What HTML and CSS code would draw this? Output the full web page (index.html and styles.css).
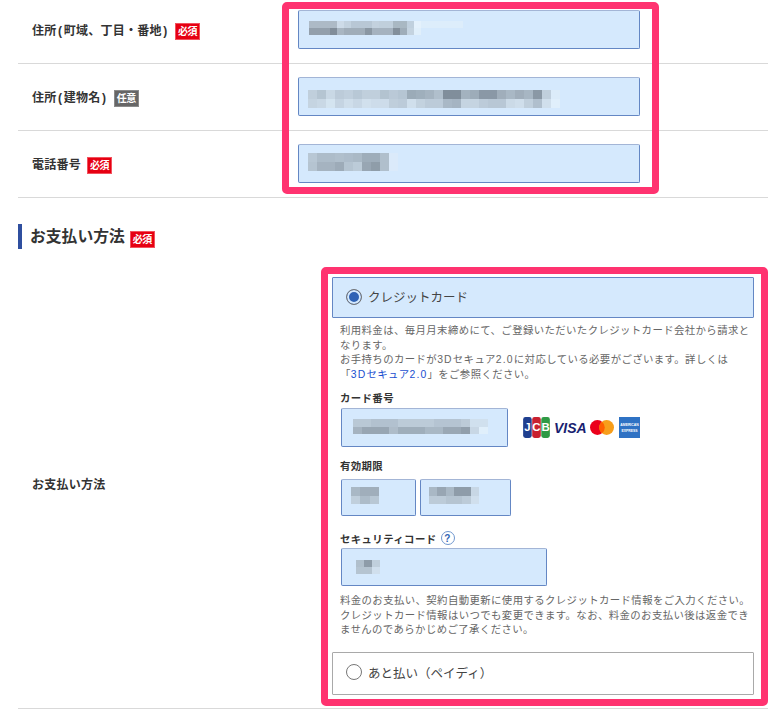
FILE: index.html
```html
<!DOCTYPE html>
<html lang="ja">
<head>
<meta charset="utf-8">
<title>お支払い方法</title>
<link rel="stylesheet" href="styles.css">
</head>
<body>
<main class="form">
  <div class="row row-first">
    <div class="label">住所<span class="paren">(</span>町域、丁目・番地<span class="paren">)</span><span class="badge">必須</span></div>
    <div class="field field-wide">
      <svg class="mosaic m1" viewBox="0 0 22 2" preserveAspectRatio="none" shape-rendering="crispEdges">
        <rect x="0" y="0" width="4" height="1" fill="#adbac6"/><rect x="4" y="0" width="1" height="1" fill="#cddbe8"/><rect x="5" y="0" width="1" height="1" fill="#c3d2df"/><rect x="6" y="0" width="3" height="1" fill="#b8c7d5"/><rect x="9" y="0" width="1" height="1" fill="#c3d1de"/><rect x="10" y="0" width="2" height="1" fill="#c0cfdc"/><rect x="12" y="0" width="2" height="1" fill="#a9b8c3"/><rect x="14" y="0" width="1" height="1" fill="#c0d0de"/><rect x="15" y="0" width="1" height="1" fill="#e4f1fc"/><rect x="16" y="0" width="6" height="1" fill="#ddedfb"/>
        <rect x="0" y="1" width="3" height="1" fill="#939fab"/><rect x="3" y="1" width="1" height="1" fill="#818d99"/><rect x="4" y="1" width="1" height="1" fill="#a9b6c2"/><rect x="5" y="1" width="3" height="1" fill="#a0adb9"/><rect x="8" y="1" width="1" height="1" fill="#8a97a3"/><rect x="9" y="1" width="3" height="1" fill="#a5b2bf"/><rect x="12" y="1" width="1" height="1" fill="#838f9b"/><rect x="13" y="1" width="1" height="1" fill="#9fadb9"/><rect x="14" y="1" width="1" height="1" fill="#c4d3e0"/><rect x="15" y="1" width="1" height="1" fill="#e0effb"/>
      </svg>
    </div>
  </div>
  <div class="row">
    <div class="label">住所<span class="paren">(</span>建物名<span class="paren">)</span><span class="badge badge-optional">任意</span></div>
    <div class="field field-wide">
      <svg class="mosaic m2" viewBox="0 0 28 2" preserveAspectRatio="none" shape-rendering="crispEdges">
        <rect x="0" y="0" width="1" height="1" fill="#c0cfdc"/><rect x="1" y="0" width="1" height="1" fill="#b5c5d2"/><rect x="2" y="0" width="1" height="1" fill="#c9d8e5"/><rect x="3" y="0" width="1" height="1" fill="#bccbd9"/><rect x="4" y="0" width="1" height="1" fill="#c0cfdd"/><rect x="5" y="0" width="1" height="1" fill="#b8c8d6"/><rect x="6" y="0" width="2" height="1" fill="#c0cfdc"/><rect x="8" y="0" width="1" height="1" fill="#b3c3d0"/><rect x="9" y="0" width="1" height="1" fill="#bac9d7"/><rect x="10" y="0" width="1" height="1" fill="#b5c5d3"/><rect x="11" y="0" width="1" height="1" fill="#9babb8"/><rect x="12" y="0" width="1" height="1" fill="#9fafbc"/><rect x="13" y="0" width="1" height="1" fill="#a5b4c1"/><rect x="14" y="0" width="1" height="1" fill="#b0bfcc"/><rect x="15" y="0" width="2" height="1" fill="#808e9b"/><rect x="17" y="0" width="1" height="1" fill="#a3b2bf"/><rect x="18" y="0" width="1" height="1" fill="#9dacb9"/><rect x="19" y="0" width="2" height="1" fill="#8a98a6"/><rect x="21" y="0" width="1" height="1" fill="#a0aebb"/><rect x="22" y="0" width="1" height="1" fill="#a9b8c5"/><rect x="23" y="0" width="1" height="1" fill="#a0aebb"/><rect x="24" y="0" width="1" height="1" fill="#a7b6c3"/><rect x="25" y="0" width="1" height="1" fill="#8a98a5"/><rect x="26" y="0" width="1" height="1" fill="#c0cfdc"/><rect x="27" y="0" width="1" height="1" fill="#dcecf9"/>
        <rect x="0" y="1" width="1" height="1" fill="#c5d4e1"/><rect x="1" y="1" width="1" height="1" fill="#c9d8e5"/><rect x="2" y="1" width="1" height="1" fill="#d4e4f0"/><rect x="3" y="1" width="1" height="1" fill="#c5d4e2"/><rect x="4" y="1" width="1" height="1" fill="#cfdeeb"/><rect x="5" y="1" width="1" height="1" fill="#c8d7e5"/><rect x="6" y="1" width="1" height="1" fill="#d1e0ed"/><rect x="7" y="1" width="2" height="1" fill="#cddcea"/><rect x="9" y="1" width="1" height="1" fill="#bfcedb"/><rect x="10" y="1" width="1" height="1" fill="#bccbd9"/><rect x="11" y="1" width="1" height="1" fill="#d0dfec"/><rect x="12" y="1" width="1" height="1" fill="#c3d2df"/><rect x="13" y="1" width="2" height="1" fill="#bccbd9"/><rect x="15" y="1" width="1" height="1" fill="#a9b8c6"/><rect x="16" y="1" width="1" height="1" fill="#a5b4c2"/><rect x="17" y="1" width="2" height="1" fill="#c5d4e1"/><rect x="19" y="1" width="1" height="1" fill="#bccbd9"/><rect x="20" y="1" width="2" height="1" fill="#b8c7d5"/><rect x="22" y="1" width="1" height="1" fill="#cbdae7"/><rect x="23" y="1" width="1" height="1" fill="#cfdeeb"/><rect x="24" y="1" width="1" height="1" fill="#c0cfdc"/><rect x="25" y="1" width="1" height="1" fill="#b0bfcd"/><rect x="26" y="1" width="1" height="1" fill="#d0dfec"/><rect x="27" y="1" width="1" height="1" fill="#e0effb"/>
      </svg>
    </div>
  </div>
  <div class="row">
    <div class="label">電話番号<span class="badge">必須</span></div>
    <div class="field field-wide">
      <svg class="mosaic m3" viewBox="0 0 10 2" preserveAspectRatio="none" shape-rendering="crispEdges">
        <rect x="0" y="0" width="1" height="1" fill="#b8c7d4"/><rect x="1" y="0" width="2" height="1" fill="#adbcc9"/><rect x="3" y="0" width="1" height="1" fill="#b0bfcc"/><rect x="4" y="0" width="1" height="1" fill="#adbcca"/><rect x="5" y="0" width="1" height="1" fill="#aab9c6"/><rect x="6" y="0" width="2" height="1" fill="#9eadba"/><rect x="8" y="0" width="1" height="1" fill="#b0bfcc"/><rect x="9" y="0" width="1" height="1" fill="#dbeafa"/>
        <rect x="0" y="1" width="1" height="1" fill="#b5c4d1"/><rect x="1" y="1" width="2" height="1" fill="#a5b3c0"/><rect x="3" y="1" width="1" height="1" fill="#9dabb8"/><rect x="4" y="1" width="1" height="1" fill="#b5c4d1"/><rect x="5" y="1" width="1" height="1" fill="#bccbd8"/><rect x="6" y="1" width="1" height="1" fill="#98a6b3"/><rect x="7" y="1" width="1" height="1" fill="#8f9da9"/><rect x="8" y="1" width="1" height="1" fill="#b0bfcc"/><rect x="9" y="1" width="1" height="1" fill="#dbeafa"/>
      </svg>
    </div>
  </div>

  <h2 class="heading">お支払い方法<span class="badge">必須</span></h2>

  <div class="row row-pay">
    <div class="label">お支払い方法</div>
    <div class="pay">
      <div class="option option-on"><span class="radio radio-on"></span>クレジットカード</div>
      <p class="note note-first">利用料金は、毎月月末締めにて、ご登録いただいたクレジットカード会社から請求となります。<br>お手持ちのカードが<span class="latin">3D</span>セキュア<span class="latin">2.0</span>に対応している必要がございます。詳しくは<br>「<a class="link" href="#"><span class="latin">3D</span>セキュア<span class="latin">2.0</span></a>」をご参照ください。</p>

      <div class="sub-label sl-card">カード番号</div>
      <div class="card-line">
        <div class="field field-card">
          <svg class="mosaic m4" viewBox="0 0 15 2" preserveAspectRatio="none" shape-rendering="crispEdges">
            <rect x="0" y="0" width="2" height="1" fill="#b9c8d5"/><rect x="2" y="0" width="3" height="1" fill="#b2c1cf"/><rect x="5" y="0" width="4" height="1" fill="#bccbd8"/><rect x="9" y="0" width="3" height="1" fill="#b5c4d2"/><rect x="12" y="0" width="1" height="1" fill="#bccbd8"/><rect x="13" y="0" width="2" height="1" fill="#d0e0ee"/>
            <rect x="0" y="1" width="1" height="1" fill="#a5b3c0"/><rect x="1" y="1" width="3" height="1" fill="#98a6b3"/><rect x="4" y="1" width="1" height="1" fill="#aebcc9"/><rect x="5" y="1" width="3" height="1" fill="#9faebb"/><rect x="8" y="1" width="2" height="1" fill="#a9b8c5"/><rect x="10" y="1" width="2" height="1" fill="#9aa8b5"/><rect x="12" y="1" width="1" height="1" fill="#919fac"/><rect x="13" y="1" width="1" height="1" fill="#c8d7e5"/><rect x="14" y="1" width="1" height="1" fill="#e0effb"/>
          </svg>
        </div>
        <div class="brands">
          <svg class="logo logo-mark-jcb" width="27" height="21" viewBox="0 0 28 22">
            <rect x="0" y="0" width="9" height="22" rx="2.5" fill="#1f3f8f"/>
            <rect x="9.5" y="0" width="9" height="22" rx="2.5" fill="#c8202f"/>
            <rect x="19" y="0" width="9" height="22" rx="2.5" fill="#2f9a45"/>
            <text class="logo-jcb" x="4.5" y="15" text-anchor="middle">J</text>
            <text class="logo-jcb" x="14" y="15" text-anchor="middle">C</text>
            <text class="logo-jcb" x="23.5" y="15" text-anchor="middle">B</text>
          </svg>
          <span class="visa">VISA</span>
          <svg class="logo" width="24" height="15" viewBox="0 0 26 16">
            <circle cx="8" cy="8" r="8" fill="#eb001b"/>
            <circle cx="18" cy="8" r="8" fill="#f79e1b"/>
            <path d="M13 1.75a8 8 0 0 1 0 12.5a8 8 0 0 1 0-12.5z" fill="#ff5f00"/>
          </svg>
          <svg class="logo amex" width="21" height="21" viewBox="0 0 21 21">
            <rect width="21" height="21" fill="#2f72c4"/>
            <text class="logo-amex" x="10.5" y="9" text-anchor="middle">AMERICAN</text>
            <text class="logo-amex" x="10.5" y="15" text-anchor="middle">EXPRESS</text>
          </svg>
        </div>
      </div>

      <div class="sub-label sl-exp">有効期限</div>
      <div class="exp-line">
        <div class="field field-month">
          <svg class="mosaic m5" viewBox="0 0 3 2" preserveAspectRatio="none" shape-rendering="crispEdges">
            <rect x="0" y="0" width="1" height="1" fill="#a9b8c5"/><rect x="1" y="0" width="2" height="1" fill="#a0aebb"/>
            <rect x="0" y="1" width="1" height="1" fill="#c0cfdc"/><rect x="1" y="1" width="1" height="1" fill="#adbcc9"/><rect x="2" y="1" width="1" height="1" fill="#b8c7d4"/>
          </svg>
        </div>
        <div class="field field-year">
          <svg class="mosaic m6" viewBox="0 0 6 2" preserveAspectRatio="none" shape-rendering="crispEdges">
            <rect x="0" y="0" width="1" height="1" fill="#a9b8c5"/><rect x="1" y="0" width="1" height="1" fill="#98a6b3"/><rect x="2" y="0" width="1" height="1" fill="#a9b8c5"/><rect x="3" y="0" width="2" height="1" fill="#8e9ca9"/><rect x="5" y="0" width="1" height="1" fill="#c8d7e5"/>
            <rect x="0" y="1" width="2" height="1" fill="#bccbd8"/><rect x="2" y="1" width="2" height="1" fill="#b5c4d1"/><rect x="4" y="1" width="1" height="1" fill="#bccbd8"/><rect x="5" y="1" width="1" height="1" fill="#d0dfed"/>
          </svg>
        </div>
      </div>

      <div class="sub-label sl-cvc">セキュリティコード<span class="help">?</span></div>
      <div class="field field-cvc">
        <svg class="mosaic m7" viewBox="0 0 3 2" preserveAspectRatio="none" shape-rendering="crispEdges">
          <rect x="0" y="0" width="1" height="1" fill="#b0bfcc"/><rect x="1" y="0" width="1" height="1" fill="#8e9ca9"/><rect x="2" y="0" width="1" height="1" fill="#c0cfdc"/>
          <rect x="0" y="1" width="2" height="1" fill="#b5c4d1"/><rect x="2" y="1" width="1" height="1" fill="#d0dfed"/>
        </svg>
      </div>

      <p class="note note-last">料金のお支払い、契約自動更新に使用するクレジットカード情報をご入力ください。クレジットカード情報はいつでも変更できます。なお、料金のお支払い後は返金できませんのであらかじめご了承ください。</p>
      <div class="option"><span class="radio"></span>あと払い（ペイディ）</div>
    </div>
  </div>
</main>
<div class="callout callout-a"></div>
<div class="callout callout-b"></div>
</body>
</html>
```
FILE: styles.css
```css
* { box-sizing: border-box; }
html, body { margin: 0; padding: 0; background: #fff; overflow: hidden; }
body {
  position: relative;
  width: 780px;
  height: 722px;
  font-family: "Liberation Sans", "Noto Sans CJK JP", sans-serif;
  color: #333;
}
.form { width: 750px; margin-left: 18px; }
.row {
  display: grid;
  grid-template-columns: 266px 342px;
  align-items: center;
  padding: 13px 0 14px 14px;
  border-bottom: 1px solid #d9d9d9;
}
.row-first { padding-top: 10px; }
.label {
  display: flex;
  align-items: center;
  margin-top: 3px;
  font-size: 12px;
  font-weight: 700;
  line-height: 17px;
  letter-spacing: 0.25px;
  color: #333;
}
.paren { padding: 0 1.5px; }
.badge {
  display: inline-flex;
  align-items: center;
  justify-content: center;
  width: 25px;
  height: 17px;
  margin-left: 6px;
  background: #e60012;
  border: 1px solid #f2525e;
  color: #fff;
  font-size: 10px;
  font-weight: 700;
  letter-spacing: -0.5px;
}
.badge-optional { background: #666; border-color: #8a8a8a; }
.field {
  display: flex;
  align-items: center;
  background: #d5e9fd;
  border: 1px solid #6487c4;
  border-top-color: #a3b5d6;
  border-radius: 2px;
}
.field-wide { width: 342px; height: 39px; padding-left: 9px; }
.mosaic { display: block; }
.m1 { width: 154px; height: 14px; margin-top: -4px; margin-left: 1px; }
.m2 { width: 252px; height: 18px; margin-top: 5px; }
.m3 { width: 90px; height: 18px; margin-top: -3px; }
.m4 { width: 135px; height: 15px; margin-left: 11px; margin-top: -3px; }
.m5 { width: 28px; height: 17px; margin-left: 9px; margin-top: -4px; }
.m6 { width: 50px; height: 17px; margin-left: 8px; margin-top: -4px; }
.m7 { width: 24px; height: 14px; margin-left: 14px; }

.heading {
  display: flex;
  align-items: center;
  height: 25px;
  margin: 26px 0 0;
  padding-left: 8px;
  border-left: 4px solid #2f4f9f;
  font-size: 15.8px;
  font-weight: 700;
  line-height: 25px;
  color: #333;
}
.heading .badge { margin-left: 5px; margin-top: 5px; }

.row-pay {
  grid-template-columns: 300px 422px;
  padding: 28px 0 13px 14px;
}
.row-pay .label { margin-top: 0; }
.pay { width: 422px; }
.option {
  display: flex;
  align-items: center;
  height: 42px;
  padding: 0 0 2px 13px;
  border: 1px solid #a9a9a9;
  border-radius: 1px;
  background: #fff;
  font-size: 12.5px;
  letter-spacing: 0;
  color: #444;
}
.option-on { height: 41px; background: #d5e9fd; border-color: #6487c4; }
.note + .option { margin-top: 14px; height: 43px; }
.radio {
  flex: none;
  width: 16px;
  height: 16px;
  margin-right: 6px;
  border: 1px solid #777;
  border-radius: 50%;
  background: #fff;
}
.radio-on { background: #2f62b5; box-shadow: inset 0 0 0 2px #d5e9fd; }
.note {
  margin: 0 0 0 8px;
  width: 412px;
  font-size: 10.4px;
  line-height: 14.5px;
  letter-spacing: 0.4px;
  color: #666;
}
.note-first { margin-top: 6px; }
.note-last { margin-top: 8px; }
.latin { letter-spacing: 1.2px; }
.link { color: #1a4fd0; text-decoration: none; }
.sub-label {
  display: flex;
  align-items: center;
  height: 14px;
  margin-left: 8px;
  font-size: 10.4px;
  font-weight: 700;
  letter-spacing: 0.4px;
  color: #333;
}
.sl-card { margin-top: 8px; }
.sl-exp { margin-top: 11px; }
.sl-cvc { margin-top: 15px; }
.help {
  display: inline-flex;
  align-items: center;
  justify-content: center;
  width: 14px;
  height: 14px;
  margin-left: 4px;
  border: 1px solid #6f97cf;
  border-radius: 50%;
  color: #2f62b5;
  font-size: 10px;
}
.card-line {
  display: flex;
  align-items: center;
  margin: 4px 0 0 9px;
}
.field-card { width: 167px; height: 39px; }
.brands {
  display: flex;
  align-items: center;
  gap: 3px;
  margin-left: 15px;
}
.logo { display: block; flex: none; }
.logo-mark-jcb { margin-right: 1px; }
.logo-jcb { fill: #fff; font-family: "Liberation Sans", sans-serif; font-size: 12px; font-weight: 700; }
.logo-amex { fill: #fff; font-family: "Liberation Sans", sans-serif; font-size: 3.4px; font-weight: 700; }
.visa {
  color: #1a1f71;
  font-family: "Liberation Sans", sans-serif;
  font-size: 14px;
  font-weight: 700;
  font-style: italic;
  letter-spacing: 0;
}
.amex { margin-left: 2px; }
.exp-line { display: flex; gap: 4px; margin: 7px 0 0 9px; }
.field-month { width: 75px; height: 37px; }
.field-year { width: 91px; height: 37px; }
.field-cvc { width: 206px; height: 38px; margin: 3px 0 0 9px; }

.callout {
  position: absolute;
  border: 7px solid #ff3370;
  border-radius: 5px;
  pointer-events: none;
}
.callout-a { left: 282px; top: 2px; width: 377px; height: 192px; }
.callout-b { left: 321px; top: 267px; width: 447px; height: 439px; }
```
